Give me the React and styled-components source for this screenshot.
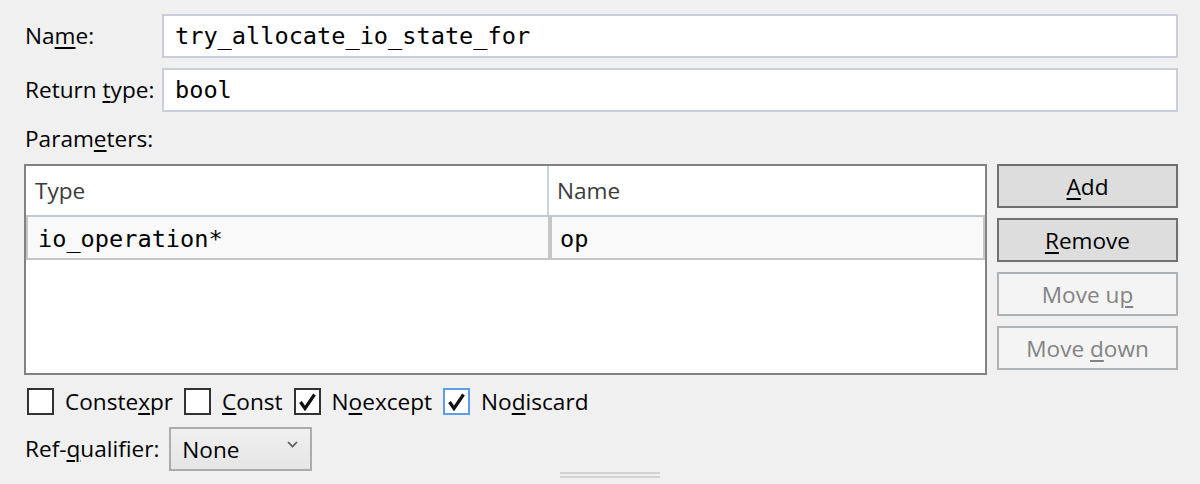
import React from "react";
import styled, { createGlobalStyle } from "styled-components";

const Global = createGlobalStyle`
  html, body { margin: 0; padding: 0; background: #f0f0f0; }
  body { font-family: "Open Sans", "Noto Sans", sans-serif; }
  u { text-decoration: underline; text-underline-offset: 3px; text-decoration-thickness: 2px; }
`;

const Dialog = styled.div`
  width: 1200px;
  height: 484px;
  box-sizing: border-box;
  background: #f0f0f0;
  padding: 14px 22px 0 24px;
  display: flex;
  flex-direction: column;
  font-size: 22.6px;
  color: #000;
  overflow: hidden;
`;

const FieldGrid = styled.div`
  display: grid;
  grid-template-columns: 138px 1fr;
  row-gap: 10px;
  align-items: center;
`;

const Label = styled.label`
  padding-left: 1px;
  font-size: 22.6px;
  line-height: 30px;
  white-space: nowrap;
`;

const TextInput = styled.div`
  height: 44px;
  box-sizing: border-box;
  border: 2px solid #cbcdda;
  background: #fff;
  padding: 0 11px;
  display: flex;
  align-items: center;
  font-family: "DejaVu Sans Mono", monospace;
  font-size: 23.6px;
`;

const SectionLabel = styled(Label)`
  display: block;
  margin-top: 12px;
`;

const ParamsArea = styled.div`
  margin-top: 10px;
  display: flex;
  gap: 10px;
  align-items: flex-start;
`;

const Table = styled.div`
  width: 963px;
  height: 211px;
  box-sizing: border-box;
  border: 2px solid #828282;
  background: #fff;
`;

const HeaderRow = styled.div`
  display: grid;
  grid-template-columns: 523px 1fr;
  height: 51px;
  box-sizing: border-box;
  border-bottom: 2px solid #bccad6;
`;

const HeaderCell = styled.div`
  display: flex;
  align-items: center;
  padding-left: ${(p) => (p.$first ? "9px" : "8px")};
  color: #3b3b3b;
  font-size: 22.6px;
  ${(p) => (p.$first ? "border-right: 2px solid #c8d3dc;" : "")}
`;

const DataRow = styled.div`
  display: grid;
  grid-template-columns: 524px 1fr;
  height: 43px;
  background: #f9f9f9;
`;

const DataCell = styled.div`
  display: flex;
  align-items: center;
  box-sizing: border-box;
  border: 2px solid #c6c6c6;
  border-top: none;
  padding: 2px 0 0 ${(p) => (p.$first ? "10px" : "8px")};
  font-family: "DejaVu Sans Mono", monospace;
  font-size: 23.6px;
`;

const ButtonColumn = styled.div`
  display: flex;
  flex-direction: column;
  gap: 10px;
  width: 181px;
`;

const Button = styled.div`
  height: 44px;
  box-sizing: border-box;
  border: 2px solid ${(p) => (p.$disabled ? "#adb2b5" : "#707070")};
  background: ${(p) => (p.$disabled ? "#f4f4f4" : "#dddddd")};
  color: ${(p) => (p.$disabled ? "#838383" : "#000")};
  display: flex;
  align-items: center;
  justify-content: center;
  font-size: 22.6px;
`;

const CheckRow = styled.div`
  margin-top: 13px;
  padding-left: 3px;
  display: flex;
  align-items: center;
  gap: 11px;
  height: 27px;
`;

const CheckItem = styled.div`
  display: flex;
  align-items: center;
  gap: 11px;
`;

const Box = styled.div`
  width: 27px;
  height: 27px;
  box-sizing: border-box;
  border: 2px solid ${(p) => (p.$focus ? "#5c9eea" : "#333")};
  background: #fff;
  display: flex;
  align-items: center;
  justify-content: center;
`;

const CheckText = styled.span`
  font-size: 22.6px;
  line-height: 27px;
`;

const RefRow = styled.div`
  margin-top: 12px;
  display: flex;
  align-items: center;
  gap: 10px;
`;

const Select = styled.div`
  width: 143px;
  height: 44px;
  box-sizing: border-box;
  border: 2px solid #acacac;
  background: linear-gradient(#f0f0f0, #e5e5e5);
  display: flex;
  align-items: center;
  justify-content: space-between;
  padding: 0 12px 0 11px;
  font-size: 22.6px;
`;

const Chevron = styled.svg`
  align-self: flex-start;
  margin-top: 12px;
`;

const Grip = styled.div`
  margin: 1px 0 0 536px;
  width: 100px;
  height: 6px;
  border-top: 2px solid #d2d2d2;
  border-bottom: 2px solid #d2d2d2;
  box-sizing: border-box;
`;

const Check = () => (
  <svg width="19" height="19" viewBox="0 0 19 19">
    <path d="M2.5 10 L7 16.5 L16.5 2.5" fill="none" stroke="#111" strokeWidth="3.2" strokeLinejoin="miter" />
  </svg>
);

const CheckBox = ({ checked, focus, children }) => (
  <CheckItem>
    <Box $focus={focus}>{checked && <Check />}</Box>
    <CheckText>{children}</CheckText>
  </CheckItem>
);

export default function App() {
  return (
    <>
      <Global />
      <Dialog>
        <FieldGrid>
          <Label>Na<u>m</u>e:</Label>
          <TextInput>try_allocate_io_state_for</TextInput>
          <Label>Return <u>t</u>ype:</Label>
          <TextInput>bool</TextInput>
        </FieldGrid>
        <SectionLabel>Param<u>e</u>ters:</SectionLabel>
        <ParamsArea>
          <Table>
            <HeaderRow>
              <HeaderCell $first>Type</HeaderCell>
              <HeaderCell>Name</HeaderCell>
            </HeaderRow>
            <DataRow>
              <DataCell $first>io_operation*</DataCell>
              <DataCell>op</DataCell>
            </DataRow>
          </Table>
          <ButtonColumn>
            <Button><span><u>A</u>dd</span></Button>
            <Button><span><u>R</u>emove</span></Button>
            <Button $disabled><span>Move u<u>p</u></span></Button>
            <Button $disabled><span>Move <u>d</u>own</span></Button>
          </ButtonColumn>
        </ParamsArea>
        <CheckRow>
          <CheckBox>Conste<u>x</u>pr</CheckBox>
          <CheckBox><u>C</u>onst</CheckBox>
          <CheckBox checked>N<u>o</u>except</CheckBox>
          <CheckBox checked focus>No<u>d</u>iscard</CheckBox>
        </CheckRow>
        <RefRow>
          <Label>Ref-<u>q</u>ualifier:</Label>
          <Select>
            <span>None</span>
            <Chevron width="11" height="7" viewBox="0 0 11 7">
              <path d="M1 1 L5.5 5.5 L10 1" fill="none" stroke="#555" strokeWidth="1.6" />
            </Chevron>
          </Select>
        </RefRow>
        <Grip />
      </Dialog>
    </>
  );
}
